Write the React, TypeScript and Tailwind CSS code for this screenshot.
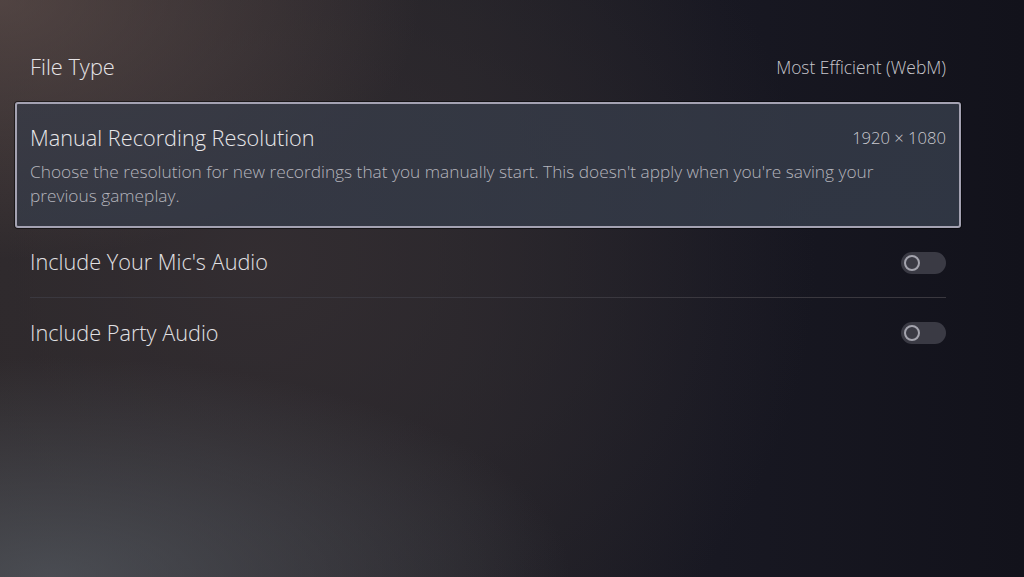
import { useState } from 'react';

type ToggleProps = { on: boolean; onClick: () => void };

function Toggle({ on, onClick }: ToggleProps) {
  return (
    <button
      onClick={onClick}
      className="relative h-[22px] w-[45px] rounded-full bg-[#3a3a44]"
    >
      <span
        className={`absolute top-[3px] h-[16px] w-[16px] rounded-full border-2 border-[#a3a3ad] ${
          on ? 'left-[26px]' : 'left-[3px]'
        }`}
      />
    </button>
  );
}

export default function App() {
  const [mic, setMic] = useState(false);
  const [party, setParty] = useState(false);

  return (
    <div
      className="h-[577px] w-[1024px] overflow-hidden bg-[#13131c] bg-[radial-gradient(ellipse_420px_260px_at_0%_0%,rgba(110,90,85,0.55),transparent),radial-gradient(ellipse_520px_220px_at_5%_100%,rgba(90,96,104,0.65),transparent),radial-gradient(ellipse_560px_520px_at_25%_45%,rgba(52,46,50,0.9),transparent),linear-gradient(90deg,#2a2628_0%,#222127_45%,#181822_70%,#12121b_100%)] pt-[33px] font-light"
      style={{ fontFamily: '"Open Sans", "Noto Sans", sans-serif' }}
    >
      <div className="ml-[15px] w-[946px]">
        <div className="flex h-[69px] items-center justify-between px-[15px]">
          <span className="text-[21.8px] text-[#e6e4e6]">File Type</span>
          <span className="text-[17.4px] text-[#c7c6cc]">Most Efficient (WebM)</span>
        </div>

        <div className="rounded-[3px] border-2 border-[#a4a2b2] bg-[#333845]/70 bg-[linear-gradient(160deg,rgba(60,62,72,0.4),rgba(50,58,72,0.7))] px-[13px] pb-[18px] pt-[22px] shadow-[0_0_0_1px_rgba(0,0,0,0.5)]">
          <div className="flex items-center justify-between">
            <span className="text-[21.7px] leading-[24px] text-[#e8e7ea]">
              Manual Recording Resolution
            </span>
            <span className="text-[16.6px] leading-[24px] text-[#c9c9cf]">1920 × 1080</span>
          </div>
          <p className="mt-[10px] pr-[50px] text-[17.3px] leading-[24px] text-[#b4b4bc]">
            Choose the resolution for new recordings that you manually start. This doesn't apply when
            you're saving your previous gameplay.
          </p>
        </div>

        <div className="px-[15px]">
          <div className="flex h-[70px] items-center justify-between border-b border-[#3a383f]">
            <span className="text-[21.7px] text-[#e2e1e4]">Include Your Mic's Audio</span>
            <Toggle on={mic} onClick={() => setMic(!mic)} />
          </div>
          <div className="flex h-[70px] items-center justify-between">
            <span className="text-[21.7px] text-[#e2e1e4]">Include Party Audio</span>
            <Toggle on={party} onClick={() => setParty(!party)} />
          </div>
        </div>
      </div>
    </div>
  );
}
